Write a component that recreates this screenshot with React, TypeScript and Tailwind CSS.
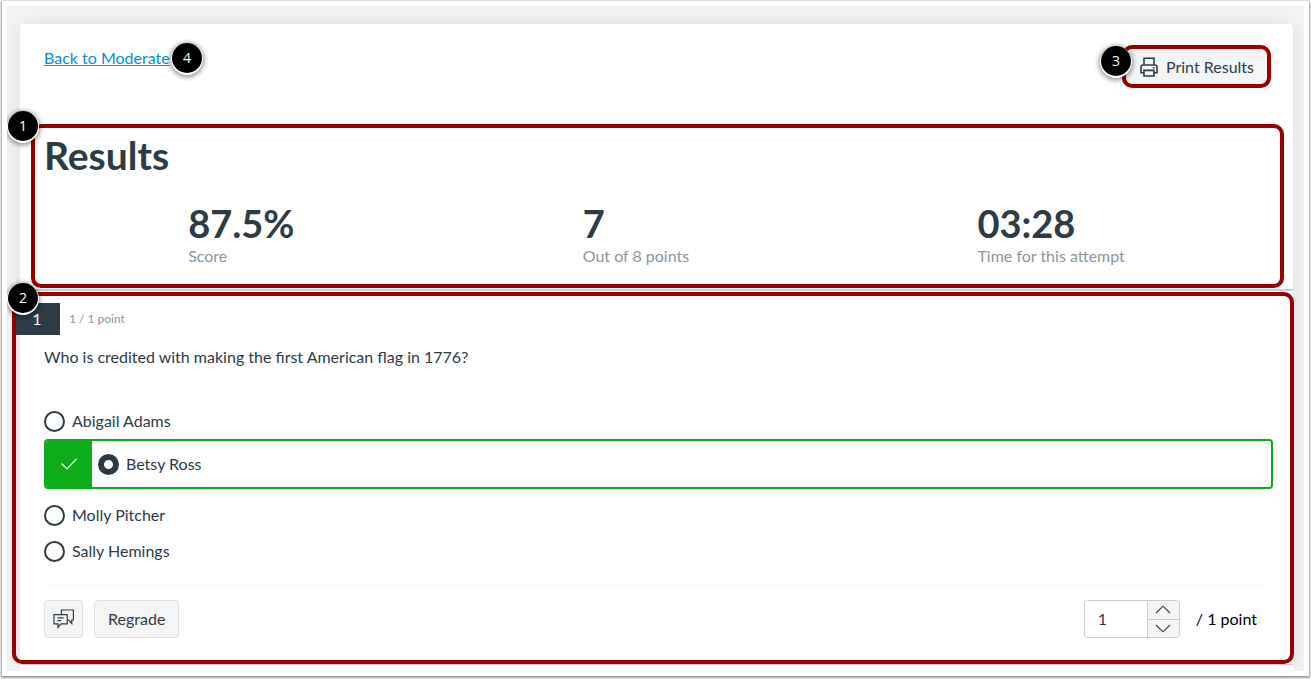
import { useState } from "react";
import type { ReactNode } from "react";

const answers = ["Abigail Adams", "Betsy Ross", "Molly Pitcher", "Sally Hemings"];
const correctAnswer = "Betsy Ross";

const stats = [
  { value: "87.5%", label: "Score" },
  { value: "7", label: "Out of 8 points" },
  { value: "03:28", label: "Time for this attempt" },
];

function Callout({ className, children }: { className: string; children: ReactNode }) {
  return (
    <span
      className={`absolute z-20 flex size-[30px] items-center justify-center rounded-full bg-black font-['Open_Sans',sans-serif] text-sm text-white shadow-[0_1px_0_1px_#fff,0_2px_5px_2px_rgba(0,0,0,0.45)] ${className}`}
    >
      {children}
    </span>
  );
}

function Outline({ className }: { className: string }) {
  return (
    <span
      aria-hidden="true"
      className={`pointer-events-none absolute z-10 rounded-[10px] border-4 border-[#990000] ${className}`}
    />
  );
}

function PrinterIcon() {
  return (
    <svg width="18" height="20" viewBox="0 0 18 20" fill="none" stroke="currentColor" strokeWidth="1.6" aria-hidden="true">
      <path d="M4 7.6V1.2h10v6.4" />
      <path d="M4 15.8H1V10Q1 8 3 8H15Q17 8 17 10V15.8H14" />
      <path d="M4 13.4h10v5.6H4z" />
      <path d="M12.6 10.8h2.2" strokeWidth="1.2" />
    </svg>
  );
}

function CommentsIcon() {
  return (
    <svg width="22" height="20" viewBox="0 0 22 20" fill="none" stroke="currentColor" strokeWidth="1.2" aria-hidden="true">
      <path d="M8.4 5.6V1h12v10h-1.6v3.4l-3.2-3.4h-1.2" />
      <path d="M1 5.6h13.2v9.2H8l-3 3.6v-3.6H1z" />
      <path d="M4.4 8.8h6.2M4.4 11.6h3.8" />
    </svg>
  );
}

function Chevron({ d }: { d: string }) {
  return (
    <svg width="16" height="9" viewBox="0 0 16 9" fill="none" stroke="currentColor" strokeWidth="1.1" aria-hidden="true">
      <path d={d} />
    </svg>
  );
}

export default function App() {
  const [selected, setSelected] = useState(correctAnswer);
  const [points, setPoints] = useState(1);

  return (
    <div className="bg-white px-0.5 pt-px pb-[3px] font-[Lato,sans-serif] text-base text-[#2d3b45]">
      <div className="border-[5px] border-white shadow-[0_1px_2px_1px_rgba(0,0,0,0.4)]">
        <div className="overflow-clip bg-[#f3f3f3] pt-[18px] pr-[11px] pl-[13px]">
          <main className="rounded-t-sm bg-white pb-1.5 shadow-[0_0_20px_rgba(0,0,0,0.08)]">
            <header className="flex items-start justify-between px-6 pt-6">
              <div className="relative leading-5">
                <a href="#moderate" className="text-[#008ee2] underline">
                  Back to Moderate
                </a>
                <Callout className="-top-[5px] left-32">4</Callout>
              </div>
              <div className="relative">
                <button
                  type="button"
                  className="flex h-[38px] items-center gap-2 rounded bg-[#f5f5f5] px-[15px] text-base"
                >
                  <PrinterIcon />
                  Print Results
                </button>
                <Outline className="-top-[3px] -right-0.5 -bottom-0.5 -left-[3px]" />
                <Callout className="-top-0.5 -left-6">3</Callout>
              </div>
            </header>

            <section className="relative mt-[38px] border-b-2 border-[#c7cdd1] px-6 pt-[7px] pb-[22px]">
              <Outline className="top-0 right-[9px] bottom-px left-[11px]" />
              <Callout className="-top-[13px] -left-3">1</Callout>
              <h1 className="text-[39px] leading-[48px] font-bold">Results</h1>
              <div className="mt-[22px] flex justify-around">
                {stats.map((stat) => (
                  <div key={stat.label}>
                    <p className="text-[38px] leading-[44px] font-bold">{stat.value}</p>
                    <p className="leading-[22px] text-[#8b969e]">{stat.label}</p>
                  </div>
                ))}
              </div>
            </section>

            <section className="relative border-b border-[#c7cdd1] pt-3 pr-6 pb-[26px] pl-6">
              <Outline className="top-px -right-px bottom-0 -left-2" />
              <Callout className="-top-2 -left-3">2</Callout>
              <div className="-ml-8 flex items-center gap-[9px]">
                <h2 className="flex h-8 w-12 items-center justify-center bg-[#2d3b45] pl-0.5 text-base text-white">
                  1
                </h2>
                <p className="text-xs text-[#8b969e]">1 / 1 point</p>
              </div>

              <fieldset className="-mr-1">
                <legend className="pt-[10px] leading-6">
                  Who is credited with making the first American flag in 1776?
                </legend>
                <div className="pt-[34px]">
                  {answers.map((answer) => {
                    const correct = answer === correctAnswer;
                    return (
                      <div
                        key={answer}
                        className={
                          correct
                            ? "mb-2 flex h-[50px] items-stretch overflow-hidden rounded border-2 border-[#0bac18]"
                            : "flex h-9 items-stretch"
                        }
                      >
                        {correct && (
                          <span className="mr-1.5 flex w-[46px] items-center justify-center bg-[#0bac18] text-white">
                            <svg width="16" height="12" viewBox="0 0 16 12" fill="none" stroke="currentColor" strokeWidth="1.2" aria-hidden="true">
                              <path d="M.5 5.5 6 11 15.5.8" />
                            </svg>
                          </span>
                        )}
                        <label className="flex items-center gap-[7px]">
                          <input
                            type="radio"
                            name="answer"
                            value={answer}
                            checked={selected === answer}
                            onChange={() => setSelected(answer)}
                            className="size-[21px] appearance-none rounded-full border-2 border-[#2d3b45] bg-white checked:border-[6px]"
                          />
                          {answer}
                        </label>
                      </div>
                    );
                  })}
                </div>
              </fieldset>

              <div className="mt-4 flex items-center border-t border-[#f5f5f5] pt-[14px]">
                <button
                  type="button"
                  aria-label="Comments"
                  className="flex h-[38px] w-[39px] items-center justify-center rounded border border-[#dfe0e1] bg-[#f5f5f5]"
                >
                  <CommentsIcon />
                </button>
                <button
                  type="button"
                  className="ml-[11px] h-[38px] rounded border border-[#dfe0e1] bg-[#f5f5f5] px-[13px]"
                >
                  Regrade
                </button>
                <div className="ml-auto flex h-[38px] overflow-hidden rounded border border-[#c7cdd1]">
                  <input
                    id="points"
                    type="text"
                    inputMode="numeric"
                    value={points}
                    onChange={(event) => setPoints(Number(event.target.value) || 0)}
                    className="w-[62px] bg-white pl-[13px] outline-none"
                  />
                  <div className="flex w-8 flex-col border-l border-[#c7cdd1] bg-[#f5f5f5]">
                    <button
                      type="button"
                      aria-label="Increase points"
                      onClick={() => setPoints(points + 1)}
                      className="flex flex-1 items-center justify-center"
                    >
                      <Chevron d="M1 8 8 1.2 15 8" />
                    </button>
                    <button
                      type="button"
                      aria-label="Decrease points"
                      onClick={() => setPoints(Math.max(0, points - 1))}
                      className="flex flex-1 items-center justify-center border-t border-[#c7cdd1]"
                    >
                      <Chevron d="M1 1 8 7.8 15 1" />
                    </button>
                  </div>
                </div>
                <label htmlFor="points" className="mr-3 ml-4 text-black">
                  / 1 point
                </label>
              </div>
            </section>
          </main>
        </div>
      </div>
    </div>
  );
}
